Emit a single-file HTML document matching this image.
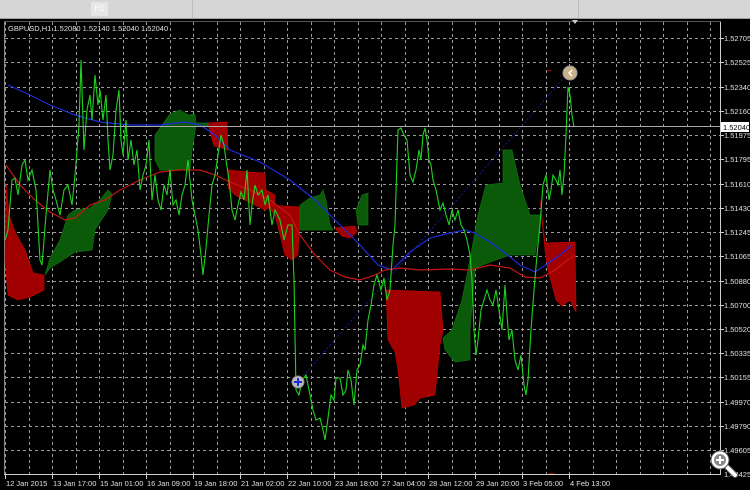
<!DOCTYPE html>
<html><head><meta charset="utf-8"><style>
html,body{margin:0;padding:0;background:#000;}
body{width:750px;height:490px;position:relative;overflow:hidden;font-family:"Liberation Sans",sans-serif;}
.top{position:absolute;left:0;top:0;width:750px;height:18px;background:#d6d6d6;border-bottom:1px solid #a0a0a0;}
.tab{position:absolute;left:91px;top:2px;width:17px;height:14px;background:#e6e6e6;color:#fff;font-size:8px;text-align:center;line-height:14px;}
.sep{position:absolute;left:192px;top:0;width:1px;height:18px;background:#bbb;}
.sep2{position:absolute;left:578px;top:0;width:1px;height:18px;background:#bbb;}
svg{position:absolute;left:0;top:0;}
</style></head><body>
<div class="top"><div class="tab">H1</div><div class="sep"></div><div class="sep2"></div></div>
<svg width="750" height="490" viewBox="0 0 750 490">
<rect x="0" y="19" width="750" height="471" fill="#000"/>
<line x1="4.5" y1="21" x2="4.5" y2="474" stroke="#888"/>
<g stroke="#9a9a9a" stroke-width="1" stroke-dasharray="3,3">
<g id="h">
<line x1="5" y1="38.5" x2="720" y2="38.5"/><line x1="5" y1="62.5" x2="720" y2="62.5"/>
<line x1="5" y1="87.5" x2="720" y2="87.5"/><line x1="5" y1="111.5" x2="720" y2="111.5"/>
<line x1="5" y1="135.5" x2="720" y2="135.5"/><line x1="5" y1="159.5" x2="720" y2="159.5"/>
<line x1="5" y1="184.5" x2="720" y2="184.5"/><line x1="5" y1="208.5" x2="720" y2="208.5"/>
<line x1="5" y1="232.5" x2="720" y2="232.5"/><line x1="5" y1="256.5" x2="720" y2="256.5"/>
<line x1="5" y1="281.5" x2="720" y2="281.5"/><line x1="5" y1="305.5" x2="720" y2="305.5"/>
<line x1="5" y1="329.5" x2="720" y2="329.5"/><line x1="5" y1="353.5" x2="720" y2="353.5"/>
<line x1="5" y1="377.5" x2="720" y2="377.5"/><line x1="5" y1="402.5" x2="720" y2="402.5"/>
<line x1="5" y1="426.5" x2="720" y2="426.5"/><line x1="5" y1="450.5" x2="720" y2="450.5"/>
</g>
<line x1="5.5" y1="22" x2="5.5" y2="474"/><line x1="29.5" y1="22" x2="29.5" y2="474"/>
<line x1="52.5" y1="22" x2="52.5" y2="474"/><line x1="76.5" y1="22" x2="76.5" y2="474"/>
<line x1="99.5" y1="22" x2="99.5" y2="474"/><line x1="123.5" y1="22" x2="123.5" y2="474"/>
<line x1="146.5" y1="22" x2="146.5" y2="474"/><line x1="170.5" y1="22" x2="170.5" y2="474"/>
<line x1="193.5" y1="22" x2="193.5" y2="474"/><line x1="217.5" y1="22" x2="217.5" y2="474"/>
<line x1="240.5" y1="22" x2="240.5" y2="474"/><line x1="264.5" y1="22" x2="264.5" y2="474"/>
<line x1="287.5" y1="22" x2="287.5" y2="474"/><line x1="311.5" y1="22" x2="311.5" y2="474"/>
<line x1="334.5" y1="22" x2="334.5" y2="474"/><line x1="358.5" y1="22" x2="358.5" y2="474"/>
<line x1="381.5" y1="22" x2="381.5" y2="474"/><line x1="405.5" y1="22" x2="405.5" y2="474"/>
<line x1="428.5" y1="22" x2="428.5" y2="474"/><line x1="452.5" y1="22" x2="452.5" y2="474"/>
<line x1="475.5" y1="22" x2="475.5" y2="474"/><line x1="499.5" y1="22" x2="499.5" y2="474"/>
<line x1="522.5" y1="22" x2="522.5" y2="474"/><line x1="546.5" y1="22" x2="546.5" y2="474"/>
<line x1="569.5" y1="22" x2="569.5" y2="474"/><line x1="593.5" y1="22" x2="593.5" y2="474"/>
<line x1="616.5" y1="22" x2="616.5" y2="474"/><line x1="640.5" y1="22" x2="640.5" y2="474"/>
<line x1="663.5" y1="22" x2="663.5" y2="474"/><line x1="687.5" y1="22" x2="687.5" y2="474"/>
<line x1="710.5" y1="22" x2="710.5" y2="474"/>
</g>
<!-- clouds -->
<g fill="#a00000" stroke="#c00000" stroke-width="0.7">
<polygon points="6,183 9,215 15,232 25,250 33,273 44,275 44,290 30,297 18,300 8,295 5,260"/>
<polygon points="208,123 227,122 228,150 219,147 214,146 210,132"/>
<polygon points="228,170 248,172 265,173 266,190 275,195 275,205 265,210 255,205 245,200 235,195 228,188"/>
<polygon points="266,205 300,207 298,255 292,260 285,255 280,235 275,215"/>
<polygon points="335,228 355,226 357,232 350,238 342,236"/>
<polygon points="386,290 440,292 443,330 440,345 435,395 420,398 414,405 402,408 398,370 395,352 388,340"/>
<polygon points="540,200 545,243 575,242 576,312 570,300 562,306 556,300 548,270 545,250"/>
</g>
<g fill="#0a5a0a" stroke="#107010" stroke-width="0.7">
<polygon points="45,275 50,258 60,240 68,215 75,210 90,208 100,200 108,190 112,194 108,210 100,222 95,230 92,250 75,252 60,262 50,268"/>
<polygon points="155,135 170,114 180,110 188,115 195,114 196,123 208,123 208,126 196,126 192,150 190,170 160,170 155,160"/>
<polygon points="300,205 310,198 320,195 323,190 326,200 330,225 333,230 300,230"/>
<polygon points="356,210 362,195 368,193 368,225 358,225"/>
<polygon points="443,338 452,330 462,300 468,270 478,215 486,185 503,183 503,150 512,150 520,185 530,215 541,215 535,255 510,255 490,262 475,268 470,330 470,360 455,362 445,350"/>
</g>
<!-- blue line -->
<polyline fill="none" stroke="#1e2adf" stroke-width="1.2" points="8,85 30,95 50,105 75,115 100,122 130,125 160,125 185,122 200,125 215,135 230,150 260,162 290,180 315,200 340,225 360,245 378,265 392,270 410,252 430,238 450,233 465,230 475,233 490,242 505,253 520,265 535,272 550,262 560,255 572,245"/>
<!-- red line -->
<polyline fill="none" stroke="#c81414" stroke-width="1.2" points="6,165 20,185 35,200 50,212 65,220 75,218 90,205 105,200 120,190 140,180 160,172 180,170 200,170 215,175 230,182 250,190 270,200 290,215 300,235 315,255 330,270 345,277 360,280 375,275 385,270 400,268 420,270 450,269 470,270 490,265 510,268 525,277 540,278 555,270 565,262 575,255"/>
<!-- dotted diagonal -->
<line x1="298" y1="382" x2="568" y2="73" stroke="#1a1a90" stroke-width="1" stroke-dasharray="2,2"/>
<!-- price -->
<polyline fill="none" stroke="#1ed21e" stroke-width="1.1" points="5,240 8,230 12,180 15,178 18,195 22,165 25,160 28,180 32,170 36,190 40,260 42,265 46,215 50,170 53,190 56,200 60,215 64,190 68,185 72,205 75,175 79,125 81,60 84,150 87,110 90,95 92,120 95,75 98,105 100,90 103,120 106,95 108,140 110,170 113,155 116,110 119,90 121,140 123,155 126,120 128,160 131,140 134,165 137,150 140,190 143,175 146,165 149,140 152,200 155,175 158,200 161,210 164,185 167,195 170,170 173,205 176,200 179,215 182,195 185,185 188,160 190,180 192,200 195,215 198,230 201,255 203,275 206,248 209,215 212,185 215,175 218,155 221,135 224,145 226,160 229,180 232,210 235,220 238,205 241,192 244,200 247,170 250,225 252,205 255,185 258,195 262,190 265,205 268,195 272,225 275,210 280,220 284,240 288,225 292,225 294,280 296,390 299,395 302,380 306,375 310,395 313,410 316,420 320,418 323,430 325,440 328,418 331,395 334,400 336,378 340,378 343,395 346,390 348,370 351,380 354,405 357,370 360,365 363,345 365,350 368,320 371,305 374,285 377,275 381,290 384,278 387,300 390,290 393,245 395,225 397,160 398,130 401,128 404,135 407,140 410,175 413,182 416,170 419,150 421,160 423,135 425,128 427,140 429,160 431,165 433,180 436,190 438,200 440,210 443,203 446,215 449,225 452,210 455,220 458,210 461,225 464,230 467,240 470,255 472,280 474,330 476,355 478,340 481,310 484,300 487,290 490,300 493,305 496,290 499,310 502,330 505,285 507,315 509,340 512,330 515,360 518,370 521,355 524,385 526,395 528,380 531,330 534,290 537,255 540,225 543,185 546,175 549,200 551,190 553,175 556,180 558,185 560,170 562,195 564,175 566,135 567,110 568,87 570,95 572,115 574,127"/>
<!-- current price line -->
<line x1="5" y1="126.5" x2="720" y2="126.5" stroke="#aaa" stroke-width="1"/>
<!-- markers -->
<circle cx="298" cy="382" r="6" fill="#bbb" stroke="#888"/>
<path d="M298 378v8M294 382h8" stroke="#1a2adf" stroke-width="2"/>
<circle cx="570" cy="73" r="7" fill="#c9b28a" stroke="#999"/>
<path d="M572 70l-3 3 3 3" stroke="#fff" stroke-width="1.5" fill="none"/>
<rect x="548" y="70" width="3" height="1" fill="#c00"/>
<rect x="549" y="473" width="5" height="1" fill="#a00"/>
<!-- frame -->
<line x1="720.5" y1="21" x2="720.5" y2="474" stroke="#cfcfcf"/>
<line x1="4" y1="474.5" x2="721" y2="474.5" stroke="#cfcfcf"/>
<line x1="4" y1="21.5" x2="721" y2="21.5" stroke="#555"/>
<polygon points="572,20 578,20 575,24" fill="#ccc"/>
<!-- axis ticks -->
<g stroke="#cfcfcf">
<line x1="720" y1="38.5" x2="724" y2="38.5"/><line x1="720" y1="62.5" x2="724" y2="62.5"/><line x1="720" y1="87.5" x2="724" y2="87.5"/><line x1="720" y1="111.5" x2="724" y2="111.5"/><line x1="720" y1="135.5" x2="724" y2="135.5"/><line x1="720" y1="159.5" x2="724" y2="159.5"/><line x1="720" y1="184.5" x2="724" y2="184.5"/><line x1="720" y1="208.5" x2="724" y2="208.5"/><line x1="720" y1="232.5" x2="724" y2="232.5"/><line x1="720" y1="256.5" x2="724" y2="256.5"/><line x1="720" y1="281.5" x2="724" y2="281.5"/><line x1="720" y1="305.5" x2="724" y2="305.5"/><line x1="720" y1="329.5" x2="724" y2="329.5"/><line x1="720" y1="353.5" x2="724" y2="353.5"/><line x1="720" y1="377.5" x2="724" y2="377.5"/><line x1="720" y1="402.5" x2="724" y2="402.5"/><line x1="720" y1="426.5" x2="724" y2="426.5"/><line x1="720" y1="450.5" x2="724" y2="450.5"/>
<line x1="5.5" y1="474" x2="5.5" y2="479"/><line x1="52.5" y1="474" x2="52.5" y2="479"/><line x1="99.5" y1="474" x2="99.5" y2="479"/><line x1="146.5" y1="474" x2="146.5" y2="479"/><line x1="193.5" y1="474" x2="193.5" y2="479"/><line x1="240.5" y1="474" x2="240.5" y2="479"/><line x1="287.5" y1="474" x2="287.5" y2="479"/><line x1="334.5" y1="474" x2="334.5" y2="479"/><line x1="381.5" y1="474" x2="381.5" y2="479"/><line x1="428.5" y1="474" x2="428.5" y2="479"/><line x1="475.5" y1="474" x2="475.5" y2="479"/><line x1="522.5" y1="474" x2="522.5" y2="479"/><line x1="569.5" y1="474" x2="569.5" y2="479"/>
</g>
<g fill="#e0e0e0" font-family="Liberation Sans, sans-serif" font-size="7.5">
<text x="8" y="31">GBPUSD,H1  1.52080 1.52140 1.52040 1.52040</text>
<text x="724" y="41">1.52705</text><text x="724" y="65">1.52525</text><text x="724" y="90">1.52340</text><text x="724" y="114">1.52160</text>
<text x="724" y="138">1.51975</text><text x="724" y="162">1.51795</text><text x="724" y="187">1.51610</text><text x="724" y="211">1.51430</text>
<text x="724" y="235">1.51245</text><text x="724" y="259">1.51065</text><text x="724" y="284">1.50880</text><text x="724" y="308">1.50700</text>
<text x="724" y="332">1.50520</text><text x="724" y="356">1.50335</text><text x="724" y="380">1.50155</text><text x="724" y="405">1.49970</text>
<text x="724" y="429">1.49790</text><text x="724" y="453">1.49605</text><text x="724" y="477">1.49425</text>
<text x="6" y="486">12 Jan 2015</text><text x="53" y="486">13 Jan 17:00</text><text x="100" y="486">15 Jan 01:00</text><text x="147" y="486">16 Jan 09:00</text>
<text x="194" y="486">19 Jan 18:00</text><text x="241" y="486">21 Jan 02:00</text><text x="288" y="486">22 Jan 10:00</text><text x="335" y="486">23 Jan 18:00</text>
<text x="382" y="486">27 Jan 04:00</text><text x="429" y="486">28 Jan 12:00</text><text x="476" y="486">29 Jan 20:00</text><text x="523" y="486">3 Feb 05:00</text><text x="570" y="486">4 Feb 13:00</text>
</g>
<rect x="721" y="122" width="28" height="10" fill="#fff"/>
<text x="723" y="130" fill="#000" font-family="Liberation Sans, sans-serif" font-size="7.5">1.52040</text>
<!-- magnifier -->
<line x1="726" y1="466" x2="735" y2="475" stroke="#555" stroke-width="6" stroke-linecap="round"/>
<line x1="726" y1="466" x2="735" y2="475" stroke="#fff" stroke-width="4" stroke-linecap="round"/>
<circle cx="720" cy="460" r="9" fill="#fff" stroke="#555" stroke-width="1"/>
<circle cx="720" cy="460" r="6" fill="#888"/>
<path d="M720 456v8M716 460h8" stroke="#fff" stroke-width="2"/>
</svg>
</body></html>
